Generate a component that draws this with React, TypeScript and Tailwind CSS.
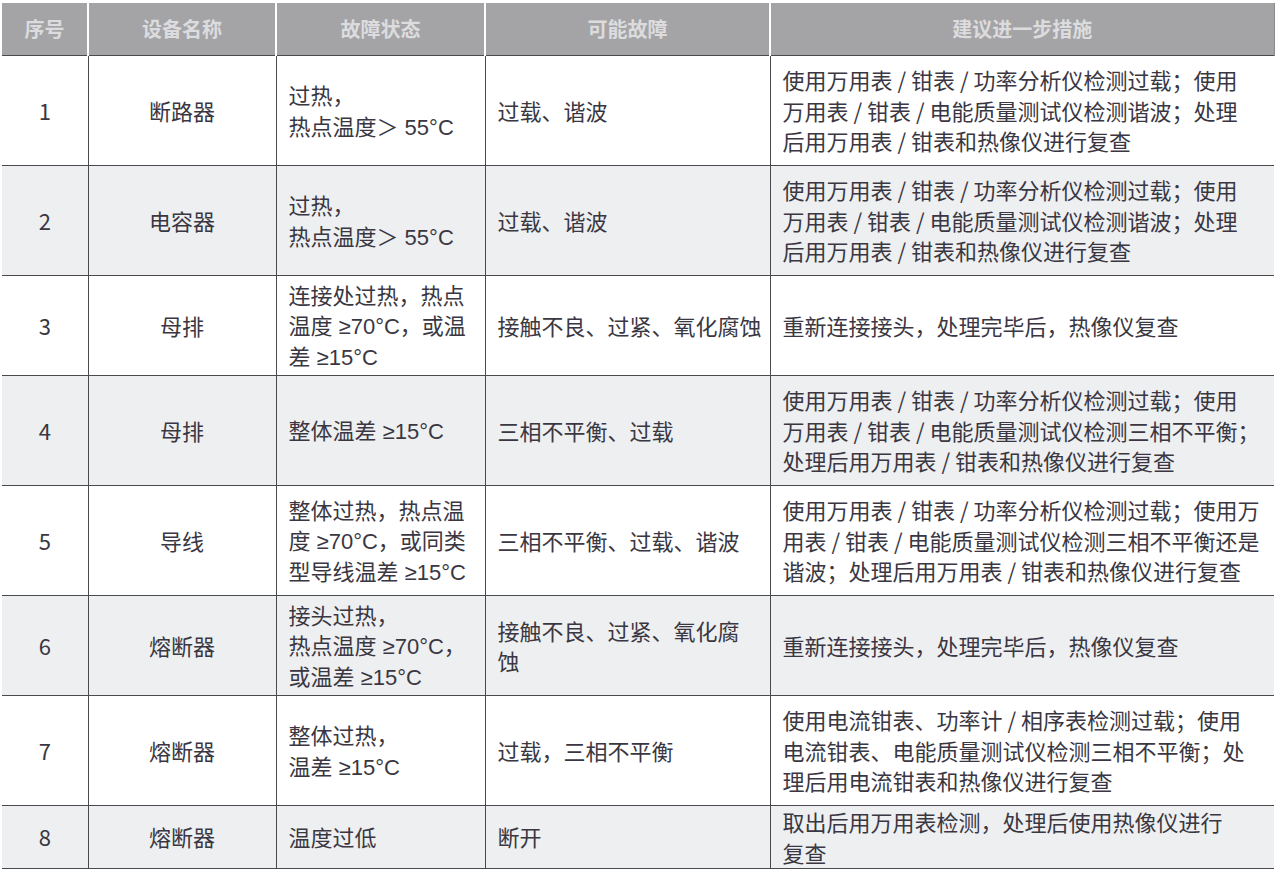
import React from 'react';

type Row = {
  no: string;
  name: string;
  state: string;
  fault: string;
  action: string;
  h: string;
  shade: boolean;
};

const rows: Row[] = [
  {
    no: '1',
    name: '断路器',
    state: '过热，\n热点温度＞ 55°C',
    fault: '过载、谐波',
    action:
      '使用万用表 / 钳表 / 功率分析仪检测过载；使用\n万用表 / 钳表 / 电能质量测试仪检测谐波；处理\n后用万用表 / 钳表和热像仪进行复查',
    h: 'h-[110px]',
    shade: false,
  },
  {
    no: '2',
    name: '电容器',
    state: '过热，\n热点温度＞ 55°C',
    fault: '过载、谐波',
    action:
      '使用万用表 / 钳表 / 功率分析仪检测过载；使用\n万用表 / 钳表 / 电能质量测试仪检测谐波；处理\n后用万用表 / 钳表和热像仪进行复查',
    h: 'h-[110px]',
    shade: true,
  },
  {
    no: '3',
    name: '母排',
    state: '连接处过热，热点\n温度 ≥70°C，或温\n差 ≥15°C',
    fault: '接触不良、过紧、氧化腐蚀',
    action: '重新连接接头，处理完毕后，热像仪复查',
    h: 'h-[100px]',
    shade: false,
  },
  {
    no: '4',
    name: '母排',
    state: '整体温差 ≥15°C',
    fault: '三相不平衡、过载',
    action:
      '使用万用表 / 钳表 / 功率分析仪检测过载；使用\n万用表 / 钳表 / 电能质量测试仪检测三相不平衡；\n处理后用万用表 / 钳表和热像仪进行复查',
    h: 'h-[110px]',
    shade: true,
  },
  {
    no: '5',
    name: '导线',
    state: '整体过热，热点温\n度 ≥70°C，或同类\n型导线温差 ≥15°C',
    fault: '三相不平衡、过载、谐波',
    action:
      '使用万用表 / 钳表 / 功率分析仪检测过载；使用万\n用表 / 钳表 / 电能质量测试仪检测三相不平衡还是\n谐波；处理后用万用表 / 钳表和热像仪进行复查',
    h: 'h-[110px]',
    shade: false,
  },
  {
    no: '6',
    name: '熔断器',
    state: '接头过热，\n热点温度 ≥70°C，\n或温差 ≥15°C',
    fault: '接触不良、过紧、氧化腐\n蚀',
    action: '重新连接接头，处理完毕后，热像仪复查',
    h: 'h-[100px]',
    shade: true,
  },
  {
    no: '7',
    name: '熔断器',
    state: '整体过热，\n温差 ≥15°C',
    fault: '过载，三相不平衡',
    action:
      '使用电流钳表、功率计 / 相序表检测过载；使用\n电流钳表、电能质量测试仪检测三相不平衡；处\n理后用电流钳表和热像仪进行复查',
    h: 'h-[110px]',
    shade: false,
  },
  {
    no: '8',
    name: '熔断器',
    state: '温度过低',
    fault: '断开',
    action: '取出后用万用表检测，处理后使用热像仪进行\n复查',
    h: 'h-[63px]',
    shade: true,
  },
];

const headers = ['序号', '设备名称', '故障状态', '可能故障', '建议进一步措施'];

const cjk = { fontFamily: '"Noto Sans CJK SC", "Noto Sans", sans-serif' };
// Latin font first so ≥ gets the plain (not slanted) glyph
const latinFirst = { fontFamily: '"Liberation Sans", "Noto Sans CJK SC", sans-serif' };

export default function App() {
  return (
    <div className="w-[1280px] h-[872px] overflow-hidden bg-white pt-[3px] pl-[2px]" style={cjk}>
      <table className="table-fixed border-collapse w-[1272px] text-[#3a3742]">
        <colgroup>
          <col className="w-[86px]" />
          <col className="w-[188px]" />
          <col className="w-[209px]" />
          <col className="w-[285px]" />
          <col className="w-[504px]" />
        </colgroup>
        <thead>
          <tr className="h-[52px] bg-[#a4a4a6]">
            {headers.map((h, i) => (
              <th
                key={h}
                className={`text-[20px] font-semibold text-[#dcdcde] text-center align-middle p-0 ${
                  i < headers.length - 1 ? 'border-r-2 border-r-white' : 'border-r border-r-[#8a8a8a]'
                }`}
              >
                {h}
              </th>
            ))}
          </tr>
        </thead>
        <tbody>
          {rows.map((r) => (
            <tr key={r.no} className={`${r.h} ${r.shade ? 'bg-[#eeeff1]' : 'bg-white'}`}>
              <td className="border border-[#4a4a4e] border-l-0 text-center align-middle text-[22px] leading-[30.5px] p-0">
                {r.no}
              </td>
              <td className="border border-[#4a4a4e] text-center align-middle text-[22px] leading-[30.5px] p-0">
                {r.name}
              </td>
              <td
                className="border border-[#4a4a4e] align-middle text-[22px] leading-[30.5px] pl-[12px] pr-0 pt-[5px] pb-0 whitespace-pre"
                style={latinFirst}
              >
                {r.state}
              </td>
              <td className="border border-[#4a4a4e] align-middle text-[22px] leading-[30.5px] pl-[12px] pr-0 py-0 whitespace-pre">
                {r.fault}
              </td>
              <td className="border border-[#4a4a4e] border-r-0 align-middle text-[22px] leading-[30.5px] pl-[12px] pr-0 py-0 whitespace-pre">
                {r.action}
              </td>
            </tr>
          ))}
        </tbody>
      </table>
    </div>
  );
}
